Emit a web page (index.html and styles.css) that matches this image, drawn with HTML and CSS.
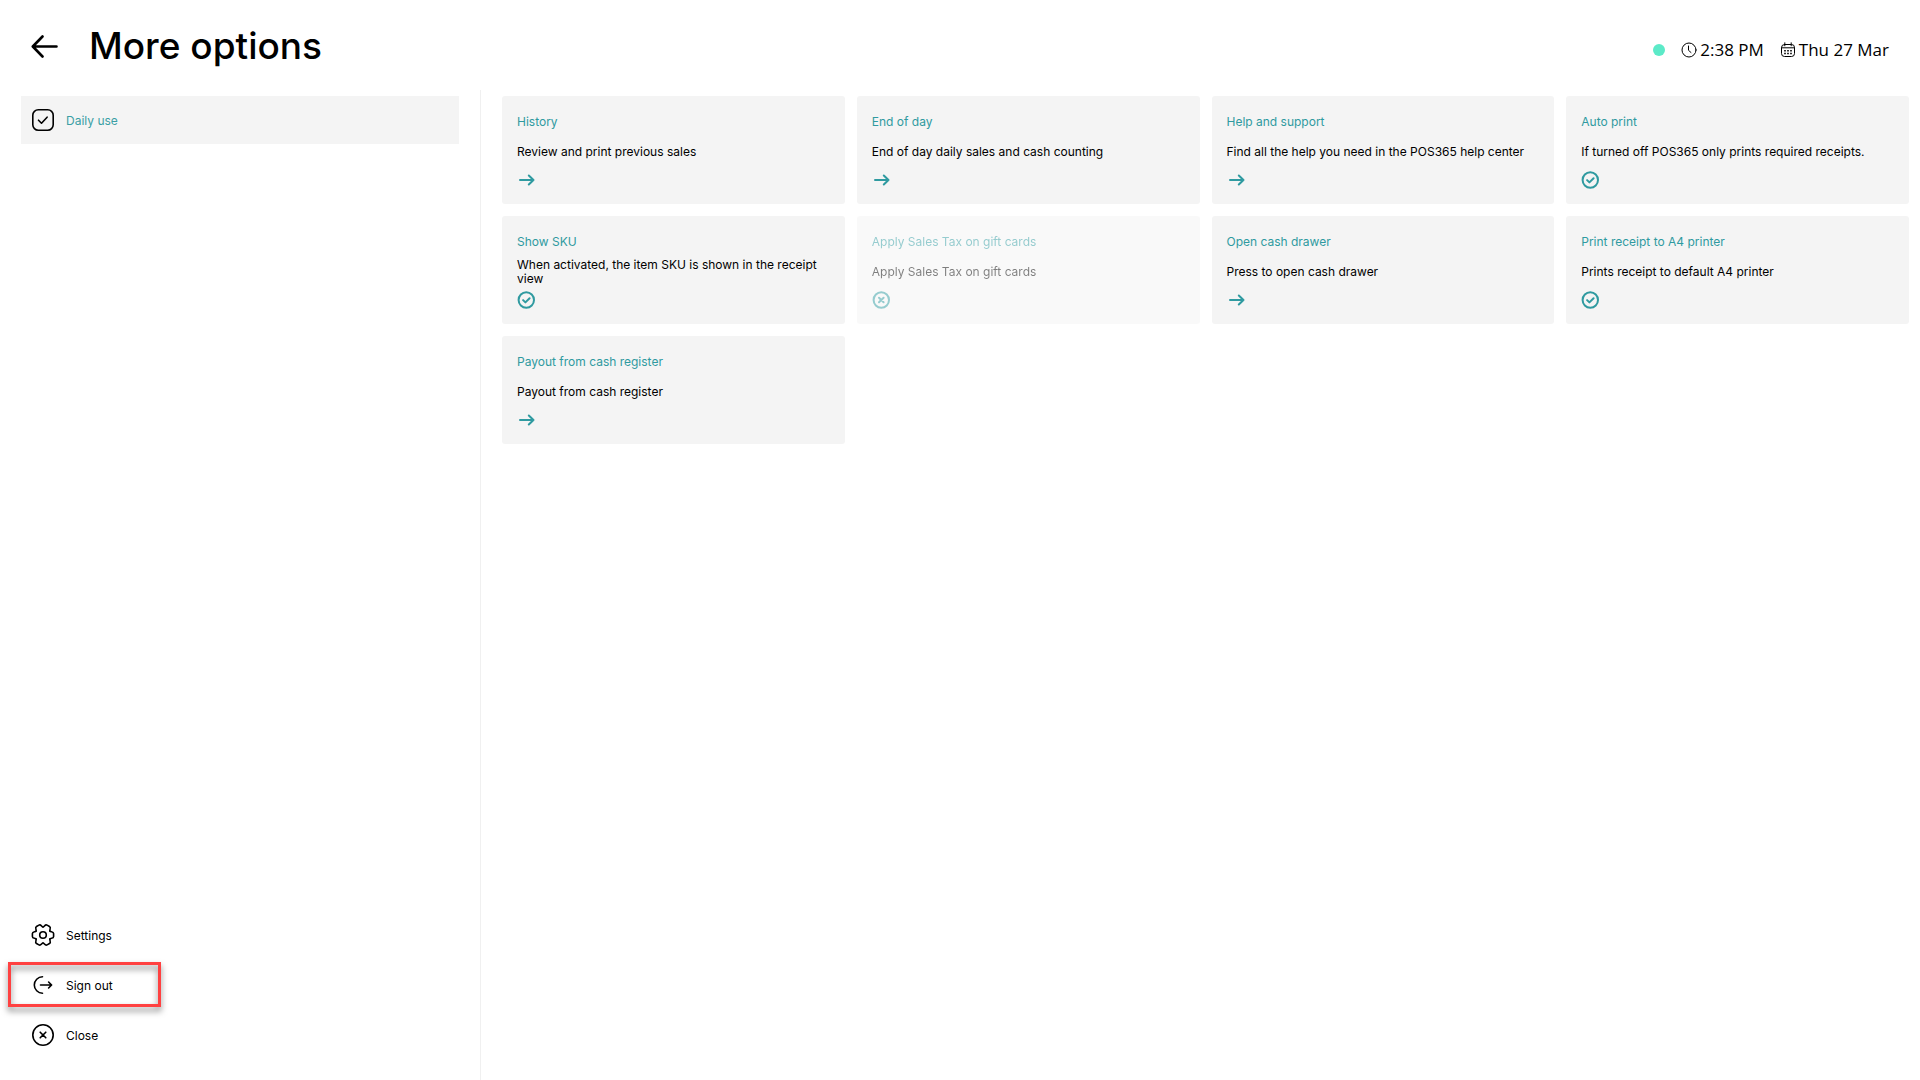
FILE: index.html
```html
<!DOCTYPE html>
<html lang="en">
<head>
    <meta charset="UTF-8">
    <title>More options</title>
    <link rel="stylesheet" href="styles.css">
</head>
<body>
    <svg class="sprite" aria-hidden="true">
        <symbol id="arrow" viewBox="0 0 18 18">
            <path d="M3 9H16.500M11.800 4.500L16.500 9l-4.700 4.500"/>
        </symbol>
        <symbol id="check" viewBox="0 0 18 18">
            <circle cx="9.300" cy="9" r="7.700"/>
            <path d="M6.100 9.100l2.300 2.300 4.200-4.200"/>
        </symbol>
        <symbol id="cross" viewBox="0 0 18 18">
            <circle cx="9.300" cy="9" r="7.700"/>
            <path d="M7 6.800l4.600 4.400M11.600 6.800l-4.600 4.400"/>
        </symbol>
    </svg>

    <header class="header">
        <button class="back" aria-label="Back">
            <svg viewBox="0 0 28 24"><path d="M25.500 12.500H2M11.500 2.500L1.800 12.500 11.500 22.500"/></svg>
        </button>
        <h1>More options</h1>
        <div class="status">
            <span class="online"></span>
            <span class="status-item">
                <svg viewBox="0 0 16 16"><circle cx="8" cy="8" r="7"/><path d="M7.500 4v4.300l2.500 2.200"/></svg>
                2:38 PM
            </span>
            <span class="status-item">
                <svg viewBox="0 0 16 16">
                    <rect x="1.500" y="2.500" width="13" height="12" rx="3"/>
                    <path d="M1.500 5.800h13M4.800 .8v3M11.200 .8v3"/>
                    <path class="dots" d="M4.200 8.800h1.600M7.200 8.800h1.600M10.200 8.800h1.600M4.200 11.500h1.600M7.200 11.500h1.600M10.200 11.500h1.600"/>
                </svg>
                Thu 27 Mar
            </span>
        </div>
    </header>

    <div class="content">
        <nav class="sidebar">
            <button class="nav-item active">
                <svg viewBox="0 0 24 24"><rect x="1.800" y="1.800" width="20.400" height="20.400" rx="5.500"/><path d="M7.500 12.200l3 3 5.600-6"/></svg>
                Daily use
            </button>
            <div class="nav-bottom">
                <button class="nav-item">
                    <svg viewBox="0 0 24 24">
                        <path id="tooth" d="M18.900 8C19.600 9.200 22.600 8.200 22.600 10.600V13.400C22.600 15.800 19.600 14.800 18.900 16"/>
                        <use href="#tooth" transform="rotate(60 12 12)"/>
                        <use href="#tooth" transform="rotate(120 12 12)"/>
                        <use href="#tooth" transform="rotate(180 12 12)"/>
                        <use href="#tooth" transform="rotate(240 12 12)"/>
                        <use href="#tooth" transform="rotate(300 12 12)"/>
                        <circle cx="12" cy="12" r="3.300"/>
                    </svg>
                    Settings
                </button>
                <button class="nav-item highlighted">
                    <svg viewBox="0 0 24 24"><path d="M11.500 3.800a8.200 8.200 0 0 0 0 16.400M9.500 12H20.500M17.600 9l3 3-3 3"/></svg>
                    Sign out
                </button>
                <button class="nav-item">
                    <svg viewBox="0 0 24 24"><circle cx="12" cy="12" r="10.200"/><path d="M9.200 9.200l5.600 5.600M14.800 9.200l-5.600 5.600"/></svg>
                    Close
                </button>
            </div>
        </nav>

        <main class="cards">
            <button class="card">
                <span class="card-title">History</span>
                <span class="card-text">Review and print previous sales</span>
                <svg><use href="#arrow"/></svg>
            </button>
            <button class="card">
                <span class="card-title">End of day</span>
                <span class="card-text">End of day daily sales and cash counting</span>
                <svg><use href="#arrow"/></svg>
            </button>
            <button class="card">
                <span class="card-title">Help and support</span>
                <span class="card-text">Find all the help you need in the POS365 help center</span>
                <svg><use href="#arrow"/></svg>
            </button>
            <button class="card" aria-pressed="true">
                <span class="card-title">Auto print</span>
                <span class="card-text">If turned off POS365 only prints required receipts.</span>
                <svg><use href="#check"/></svg>
            </button>
            <button class="card" aria-pressed="true">
                <span class="card-title">Show SKU</span>
                <span class="card-text">When activated, the item SKU is shown in the receipt view</span>
                <svg><use href="#check"/></svg>
            </button>
            <button class="card" aria-pressed="false" disabled>
                <span class="card-title">Apply Sales Tax on gift cards</span>
                <span class="card-text">Apply Sales Tax on gift cards</span>
                <svg><use href="#cross"/></svg>
            </button>
            <button class="card">
                <span class="card-title">Open cash drawer</span>
                <span class="card-text">Press to open cash drawer</span>
                <svg><use href="#arrow"/></svg>
            </button>
            <button class="card" aria-pressed="true">
                <span class="card-title">Print receipt to A4 printer</span>
                <span class="card-text">Prints receipt to default A4 printer</span>
                <svg><use href="#check"/></svg>
            </button>
            <button class="card">
                <span class="card-title">Payout from cash register</span>
                <span class="card-text">Payout from cash register</span>
                <svg><use href="#arrow"/></svg>
            </button>
        </main>
    </div>
</body>
</html>
```
FILE: styles.css
```css
*, *::after {
    box-sizing: border-box;
}
body {
    margin: 0;
    min-height: 100vh;
    display: flex;
    flex-direction: column;
    font-family: Inter, sans-serif;
    font-size: 12px;
    color: #000;
    background: #fff;
}
button {
    border: 0;
    padding: 0;
    background: none;
    font: inherit;
    color: inherit;
    text-align: left;
    cursor: pointer;
}
svg {
    flex: none;
    fill: none;
    stroke: currentColor;
    stroke-linecap: round;
    stroke-linejoin: round;
}
.sprite {
    display: none;
}

.header {
    display: flex;
    align-items: center;
    height: 90px;
    padding: 1px 31px 0;
}
.back svg {
    display: block;
    width: 28px;
    height: 24px;
    stroke-width: 2.6;
}
h1 {
    margin: 0 0 0 30px;
    font-size: 37px;
    line-height: 44px;
    font-weight: 500;
}
.status {
    display: flex;
    align-items: center;
    gap: 16px;
    margin-left: auto;
    padding-top: 8px;
    font-family: "Open Sans", "Noto Sans", sans-serif;
    font-size: 17px;
    line-height: 24px;
}
.online {
    width: 12px;
    height: 12px;
    border-radius: 50%;
    background: #5ceac8;
}
.status-item {
    display: flex;
    align-items: center;
    gap: 3px;
}
.status-item svg {
    width: 16px;
    height: 16px;
}
.status-item .dots {
    stroke-width: 1.5;
    stroke-linecap: butt;
}

.content {
    flex: 1;
    display: flex;
}
.sidebar {
    width: 25%;
    display: flex;
    flex-direction: column;
    justify-content: space-between;
    padding: 6px 21px 21px;
}
.nav-item {
    position: relative;
    display: flex;
    align-items: center;
    gap: 11px;
    width: 100%;
    height: 48px;
    padding: 0 10px;
}
.nav-item svg {
    width: 24px;
    height: 24px;
    stroke-width: 1.6;
}
.active {
    background: #f4f4f4;
    color: #3a9fa5;
}
.active svg {
    color: #000;
}
.nav-bottom {
    display: flex;
    flex-direction: column;
    gap: 2px;
}
/* red frame around the sign out button */
.highlighted::after {
    content: "";
    position: absolute;
    top: 1px;
    left: -13px;
    width: 153px;
    height: 45px;
    border: 3px solid #ff4141;
    filter: drop-shadow(0 4px 3px rgba(0, 0, 0, 0.5));
}

.cards {
    flex: 1;
    display: grid;
    grid-template-columns: repeat(4, 1fr);
    grid-auto-rows: 108px;
    gap: 12px;
    padding: 6px 11px 20px 21px;
    border-left: 1px solid #f0f0f0;
}
.card {
    display: flex;
    flex-direction: column;
    padding: 16px 15px 12px;
    border-radius: 3px;
    background: #f4f4f4;
}
.card-title {
    line-height: 20px;
    color: #2f9aa0;
}
.card-text {
    display: flex;
    align-items: center;
    height: 32px;
    margin: 4px 0 3px;
    line-height: 14px;
}
.card svg {
    width: 18px;
    height: 18px;
    color: #2f9aa0;
    stroke-width: 2;
}
.card:disabled {
    opacity: 0.5;
    cursor: default;
}
```
